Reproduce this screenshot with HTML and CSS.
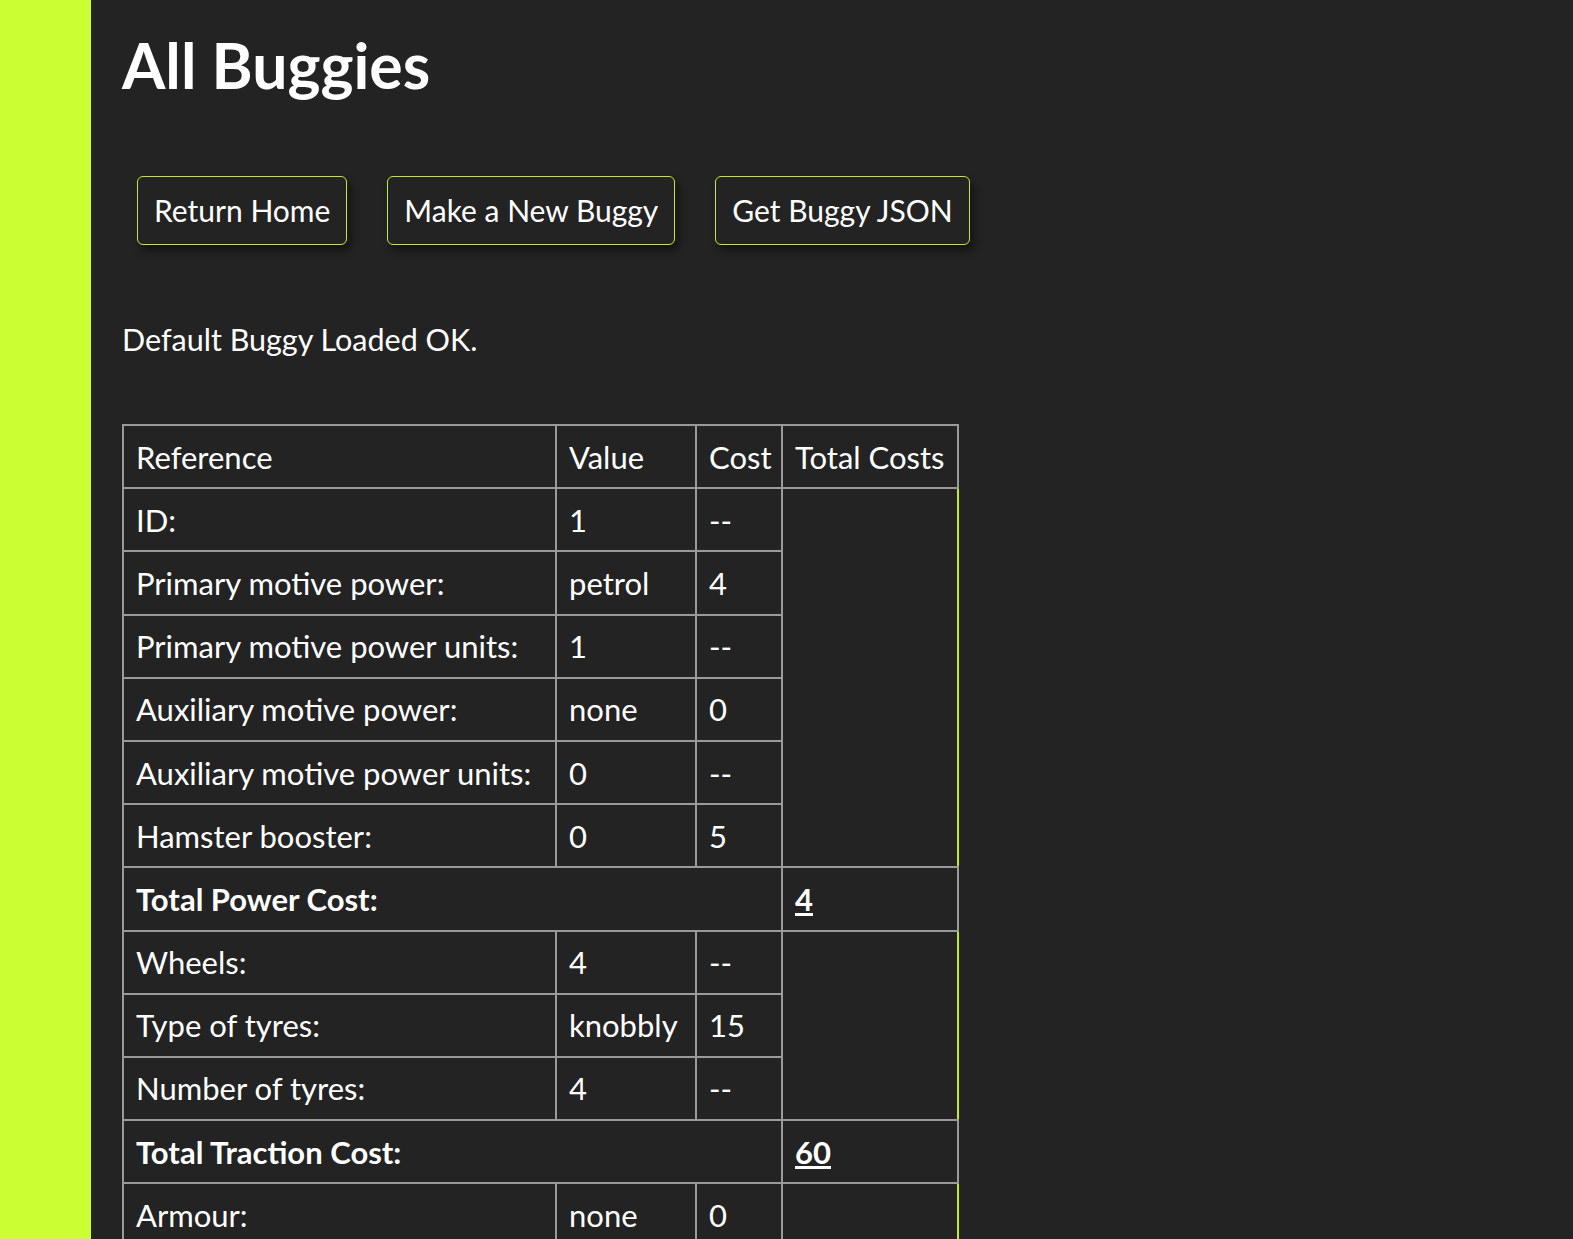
FILE: index.html
```html
<!DOCTYPE html>
<html lang="en">
<head>
<meta charset="utf-8">
<title>All Buggies</title>
<link rel="stylesheet" href="styles.css">
</head>
<body>
<div class="page">
  <aside class="sidebar"></aside>
  <main class="content">
    <h1 class="title">All Buggies</h1>
    <div class="actions">
      <a class="btn" href="#">Return Home</a>
      <a class="btn" href="#">Make a New Buggy</a>
      <a class="btn" href="#">Get Buggy JSON</a>
    </div>
    <p class="status">Default Buggy Loaded OK.</p>
    <table class="buggy">
      <colgroup>
        <col class="c-ref"><col class="c-val"><col class="c-cost"><col class="c-total">
      </colgroup>
      <thead>
        <tr><th>Reference</th><th>Value</th><th>Cost</th><th>Total Costs</th></tr>
      </thead>
      <tbody>
        <tr><td>ID:</td><td>1</td><td>--</td><td class="span" rowspan="6"></td></tr>
        <tr><td>Primary motive power:</td><td>petrol</td><td>4</td></tr>
        <tr><td>Primary motive power units:</td><td>1</td><td>--</td></tr>
        <tr><td>Auxiliary motive power:</td><td>none</td><td>0</td></tr>
        <tr><td>Auxiliary motive power units:</td><td>0</td><td>--</td></tr>
        <tr><td>Hamster booster:</td><td>0</td><td>5</td></tr>
        <tr class="sum"><td colspan="3">Total Power Cost:</td><td><a href="#">4</a></td></tr>
        <tr><td>Wheels:</td><td>4</td><td>--</td><td class="span" rowspan="3"></td></tr>
        <tr><td>Type of tyres:</td><td>knobbly</td><td>15</td></tr>
        <tr><td>Number of tyres:</td><td>4</td><td>--</td></tr>
        <tr class="sum"><td colspan="3">Total Traction Cost:</td><td><a href="#">60</a></td></tr>
        <tr><td>Armour:</td><td>none</td><td>0</td><td class="span"></td></tr>
      </tbody>
    </table>
  </main>
</div>
</body>
</html>
```
FILE: styles.css
```css
html, body {
  margin: 0;
  padding: 0;
  background: #232323;
  color: #ffffff;
  font-family: "Lato", "Open Sans", sans-serif;
  height: 100%;
  overflow: hidden;
}
.page {
  display: flex;
  min-height: 100%;
}
.sidebar {
  width: 91px;
  flex: none;
  background: #ccff33;
}
.content {
  padding: 0 31px;
}
.title {
  margin: 27px 0 0;
  font-size: 62.5px;
  line-height: 76px;
  font-weight: 700;
}
.actions {
  display: flex;
  gap: 40px;
  margin: 73px 0 0 15px;
}
.btn {
  display: inline-block;
  border: 1px solid #c2ea2a;
  border-radius: 6px;
  padding: 0 16px;
  height: 67px;
  line-height: 67px;
  color: #fff;
  text-decoration: none;
  font-size: 30px;
  box-shadow: 4px 6px 8px rgba(0,0,0,0.45);
}
.status {
  margin: 74px 0 0;
  font-size: 30.5px;
  line-height: 40px;
}
.buggy {
  margin-top: 65px;
  border-collapse: collapse;
  table-layout: fixed;
  width: 835px;
  font-size: 31px;
}
.c-ref { width: 433px; }
.c-val { width: 140px; }
.c-cost { width: 86px; }
.c-total { width: 176px; }
.buggy th, .buggy td {
  border: 2px solid #9a9a9a;
  padding: 0 12px;
  height: 61.2px;
  text-align: left;
  font-weight: 400;
  white-space: nowrap;
  overflow: visible;
}
.buggy td.span {
  border-right: 2px solid #c2ea2a;
}
.buggy .sum td {
  font-weight: 700;
}
.buggy a {
  color: #fff;
}
```
